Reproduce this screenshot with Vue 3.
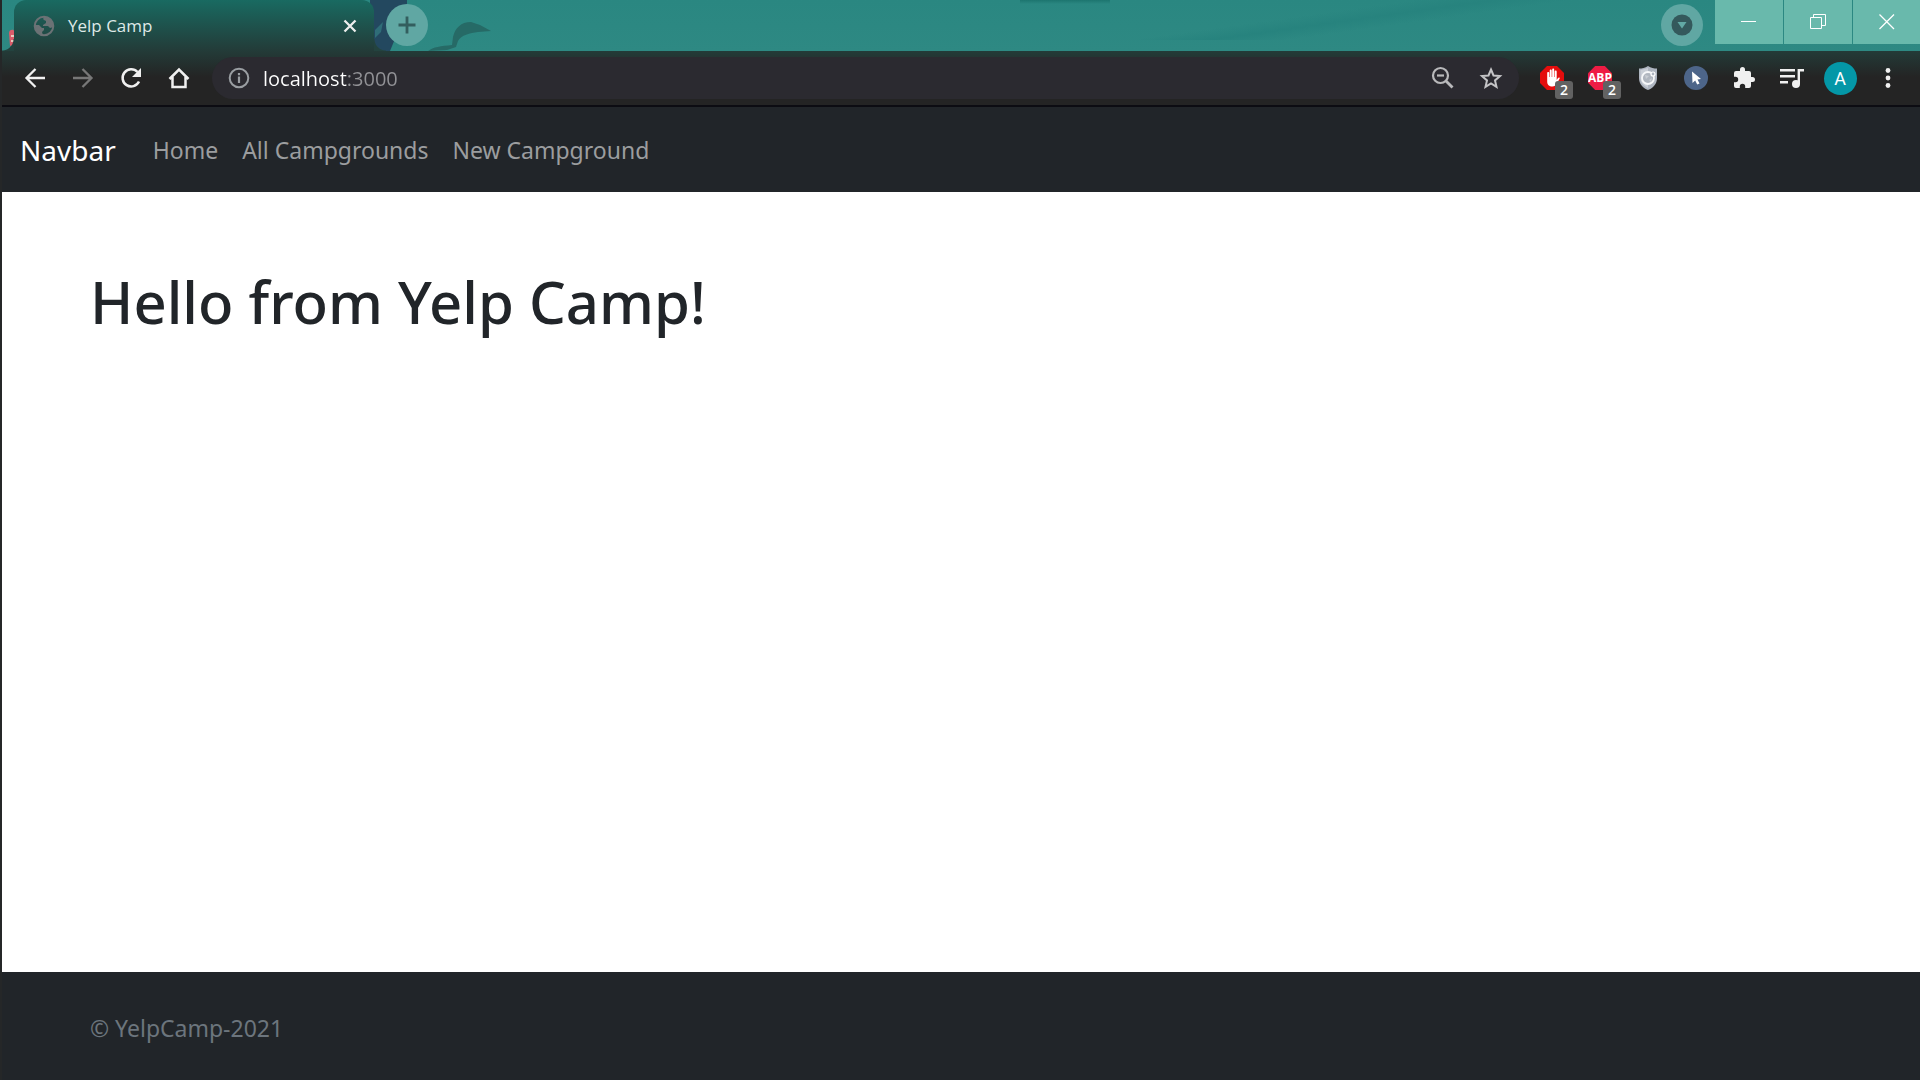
<script setup>
import { ref } from 'vue'

const address = ref('localhost:3000')
const links = ['Home', 'All Campgrounds', 'New Campground']
</script>

<template>
  <div class="window">
    <header class="browser">
      <div class="strip">
        <svg class="scenery" width="560" height="51" viewBox="0 0 560 51" aria-hidden="true">
          <path d="M370 0h37v6l-6 18-11 27h-20z" fill="#23485f" />
          <path d="M375 30l8-8-2 10-6 6z" fill="#2f6d78" />
          <path d="M9 33c0-4 5-4 5-2v14l-4 1z" fill="#d95c6a" />
          <path d="M11 36h3M11 41h3" stroke="#e8c9bd" stroke-width="2" />
          <path d="M428 51c5-4 13-5 24-6l1-8c2-9 8-15 18-15l9 3 11 6-13 1c-8 1-17 3-20 9l-2 6-9 3z" fill="#266a66" />
        </svg>
        <div class="tab">
          <svg width="24" height="24" viewBox="0 0 24 24" aria-hidden="true">
            <circle cx="12" cy="12" r="9.300" fill="none" stroke="#6b7275" stroke-width="2" />
            <path d="M12 2.500c-1 2-1 3 0 3.500l2 1v2l-3 2v1h5l2 2 3.500-1c.5-6-3.500-10-9.500-10.500zM3 11l4 0 3 3 2 0 0 2-2 2 1 3.500C6 21 2.500 17 3 11z" fill="#6b7275" />
          </svg>
          <span class="tab-title">Yelp Camp</span>
          <button class="tab-close" aria-label="Close tab">
            <svg width="16" height="16" viewBox="0 0 16 16"><path d="M2.500 2.500l11 11M13.500 2.500l-11 11" stroke="#eceeed" stroke-width="2.300" /></svg>
          </button>
        </div>
        <button class="round new-tab" aria-label="New tab">
          <svg width="20" height="20" viewBox="0 0 20 20"><path d="M10 1.500v17M1.500 10h17" stroke="#335e5e" stroke-width="2.800" /></svg>
        </button>
        <button class="round tab-search" aria-label="Search tabs">
          <svg width="22" height="22" viewBox="0 0 22 22"><circle cx="11" cy="11" r="10.500" fill="#34595c" /><path d="M6.500 8h9L11 14.500z" fill="#62a9a5" /></svg>
        </button>
        <div class="controls">
          <button aria-label="Minimize"><svg width="16" height="16" viewBox="0 0 16 16"><path d="M0 7.500h15" stroke="#fff" /></svg></button>
          <button aria-label="Restore"><svg width="16" height="16" viewBox="0 0 16 16"><path d="M.5 3.500h11v11H.5zM3.500 3V.5h12v11H12" fill="none" stroke="#fff" /></svg></button>
          <button aria-label="Close"><svg width="16" height="16" viewBox="0 0 16 16"><path d="M.5 .5l14.500 14.500M15 .5L.5 15" stroke="#fff" stroke-width="1.300" /></svg></button>
        </div>
      </div>

      <div class="toolbar">
        <button class="tool" aria-label="Back">
          <svg width="24" height="24" viewBox="0 0 24 24" fill="none" stroke="#f0f0f0" stroke-width="2.300"><path d="M22 12H4M12.500 3L3.500 12l9 9" /></svg>
        </button>
        <button class="tool" aria-label="Forward">
          <svg width="24" height="24" viewBox="0 0 24 24" fill="none" stroke="#777" stroke-width="2.300"><path d="M2 12h18M11.500 3l9 9-9 9" /></svg>
        </button>
        <button class="tool" aria-label="Reload">
          <svg width="24" height="24" viewBox="0 0 24 24"><path d="M20 15.500A8.600 8.600 0 1 1 18.500 6" fill="none" stroke="#f0f0f0" stroke-width="2.500" /><path d="M22 2v9h-9z" fill="#f0f0f0" /></svg>
        </button>
        <button class="tool" aria-label="Home">
          <svg width="24" height="24" viewBox="0 0 24 24" fill="none" stroke="#f0f0f0" stroke-width="2.500"><path d="M2.500 13L12 3.500l9.500 9.500M5.500 11v10h13V11" /></svg>
        </button>
        <div class="omnibox">
          <button class="inner" aria-label="View site information">
            <svg width="24" height="24" viewBox="0 0 24 24"><circle cx="12" cy="12" r="9.300" fill="none" stroke="#9a9ea2" stroke-width="2" /><path d="M12 10.500V17M12 7v2.200" stroke="#9a9ea2" stroke-width="2.200" /></svg>
          </button>
          <input v-model="address" class="address" type="text" aria-label="Address" spellcheck="false">
          <button class="inner" aria-label="Zoom">
            <svg width="24" height="24" viewBox="0 0 24 24" fill="none" stroke="#b9b9bb" stroke-width="2.200"><circle cx="9.500" cy="9.500" r="7.500" /><path d="M6 9.500h7" /><path d="M15 15l6.500 6.500" stroke-width="2.800" /></svg>
          </button>
          <button class="inner star" aria-label="Bookmark this tab">
            <svg width="24" height="24" viewBox="0 0 24 24" fill="none" stroke="#c4c4c6" stroke-width="2"><path d="M12 3.500l2.500 6 6.500.6-5 4.300 1.500 6.400-5.500-3.400-5.500 3.400L8 14.400l-5-4.300 6.500-.6z" /></svg>
          </button>
        </div>
        <button class="tool" aria-label="AdBlock">
          <svg width="24" height="24" viewBox="0 0 24 24"><path d="M7 0h10l7 7v10l-7 7H7l-7-7V7z" fill="#e40d0d" /><path d="M7.200 7c0-1.400 2-1.400 2 0v4h.5V4.500c0-1.500 2-1.500 2 0V11h.5V3.700c0-1.500 2-1.500 2 0V11h.5V5.500c0-1.500 2-1.500 2 0V14l1.300-2c.8-1 2.200-.5 1.600.7L16.500 18c-.8 1.600-2 2.500-4 2.500-3.500 0-5.300-1.500-5.300-5z" fill="#fff" /></svg>
          <span class="badge">2</span>
        </button>
        <button class="tool" aria-label="Adblock Plus">
          <span class="abp">ABP</span>
          <span class="badge">2</span>
        </button>
        <button class="tool" aria-label="Shield">
          <svg width="24" height="24" viewBox="0 0 24 24"><path d="M12 0c3 2 6 2.500 9 2.500V12c0 6-4 10-9 12-5-2-9-6-9-12V2.500C6 2.500 9 2 12 0z" fill="#aeb5c0" /><path d="M12 2v20c-4-2-7.500-5-7.500-10V4z" fill="#c9ced6" /><circle cx="12" cy="12" r="6" fill="#b0b6bf" stroke="#f6f7f9" stroke-width="1.800" /><path d="M9 9l4 1-3 3zM13 14l3-2-1 4z" fill="#c9cdd3" /><circle cx="17" cy="8" r="2" fill="#aeb5c0" stroke="#fff" stroke-width="1.200" /></svg>
        </button>
        <button class="tool" aria-label="Pointer">
          <svg width="24" height="24" viewBox="0 0 24 24"><circle cx="12" cy="12" r="12" fill="#4d6589" /><path d="M8 5.500l9 7.500-3.500.6 2 3.900-2.300 1-2-4L8.500 17z" fill="#fff" /></svg>
        </button>
        <button class="tool" aria-label="Extensions">
          <svg width="24" height="24" viewBox="0 0 24 24"><path d="M20.500 11H19V7a2 2 0 0 0-2-2h-4V3.500a2.500 2.500 0 0 0-5 0V5H4a2 2 0 0 0-2 2v3.800h1.500a2.700 2.700 0 0 1 0 5.400H2V20a2 2 0 0 0 2 2h3.800v-1.500a2.700 2.700 0 0 1 5.400 0V22H17a2 2 0 0 0 2-2v-4h1.500a2.500 2.500 0 0 0 0-5z" fill="#f0f0f0" /></svg>
        </button>
        <button class="tool" aria-label="Media controls">
          <svg width="24" height="24" viewBox="0 0 24 24"><path d="M0 4.200h15M0 10.200h15M0 16.200h8" stroke="#f0f0f0" stroke-width="2.400" /><circle cx="16" cy="18" r="4" fill="#f0f0f0" /><path d="M18.800 18V4.200H24" fill="none" stroke="#f0f0f0" stroke-width="2.400" /></svg>
        </button>
        <button class="tool" aria-label="Profile"><span class="avatar">A</span></button>
        <button class="tool" aria-label="Menu">
          <svg width="24" height="24" viewBox="0 0 24 24" fill="#f0f0f0"><circle cx="12" cy="4.500" r="2.400" /><circle cx="12" cy="12" r="2.400" /><circle cx="12" cy="19.500" r="2.400" /></svg>
        </button>
      </div>
    </header>

    <nav class="navbar">
      <a class="brand" href="#">Navbar</a>
      <a v-for="link in links" :key="link" class="link" href="#">{{ link }}</a>
    </nav>
    <main class="content">
      <h1>Hello from Yelp Camp!</h1>
    </main>
    <footer class="footer">
      <span>© YelpCamp-2021</span>
    </footer>
  </div>
</template>

<style>
body {
  margin: 0;
}
</style>

<style scoped>
.window {
  box-sizing: border-box;
  display: flex;
  flex-direction: column;
  min-height: 100vh;
  border-left: 2px solid #252728;
  background: #fff;
  font-family: "Segoe UI", "Noto Sans", "Open Sans", sans-serif;
}

.browser {
  font-family: "Segoe UI", "Open Sans", "Noto Sans", sans-serif;
}

button {
  padding: 0;
  border: 0;
  background: none;
  color: inherit;
  font: inherit;
}

svg {
  display: block;
  flex: none;
}

.strip {
  position: relative;
  display: flex;
  height: 51px;
  padding-left: 12px;
  background:
    linear-gradient(172deg, transparent 40%, #27837e 50%, transparent 60%) 1100px 0 / 500px 40px no-repeat,
    linear-gradient(#1d756f, transparent) 1018px 0 / 90px 4px no-repeat,
    linear-gradient(#2a8781, #2e8983);
}

.scenery {
  position: absolute;
  top: 0;
  left: -2px;
}

.tab {
  position: relative;
  display: flex;
  align-items: center;
  box-sizing: border-box;
  width: 360px;
  padding: 0 16px 0 18px;
  border-radius: 12px 12px 0 0;
  background: linear-gradient(#196a61, #233b38);
}

.tab::before,
.tab::after {
  content: "";
  position: absolute;
  bottom: 0;
  width: 12px;
  height: 12px;
}

.tab::before {
  right: 100%;
  background: radial-gradient(circle at 0 0, transparent 11px, #23433f 12px);
}

.tab::after {
  left: 100%;
  background: radial-gradient(circle at 100% 0, transparent 11px, #23433f 12px);
}

.tab-title {
  flex: 1;
  padding-left: 12px;
  color: #dfe9e7;
  font-size: 17px;
  line-height: 24px;
}

.round {
  position: relative;
  display: grid;
  place-items: center;
  width: 42px;
  height: 42px;
  margin-top: 4px;
  border-radius: 50%;
  background: #60a7a3;
}

.new-tab {
  margin-left: 12px;
}

.tab-search {
  margin-right: 12px;
  margin-left: auto;
}

.controls {
  display: flex;
  gap: 1px;
  height: 44px;
}

.controls button {
  display: grid;
  place-items: center;
  width: 68px;
  background: #69b9ac;
}

.controls button:last-child {
  width: 67px;
}

.toolbar {
  display: flex;
  align-items: center;
  height: 54px;
  padding: 0 8px 0 9px;
  border-bottom: 2px solid #0c0c12;
  background: linear-gradient(#233b38, #242424 26px);
}

.tool {
  position: relative;
  display: grid;
  flex: none;
  place-items: center;
  width: 48px;
  height: 48px;
}

.omnibox {
  display: flex;
  flex: 1;
  align-items: center;
  height: 42px;
  margin: 0 9px;
  padding: 0 4px 0 15px;
  border-radius: 21px;
  background: #2b2a30;
}

.inner {
  display: grid;
  place-items: center;
  width: 48px;
}

.inner:first-child {
  width: 24px;
}

.address {
  flex: 1;
  min-width: 0;
  margin-left: 12px;
  padding: 2px 0 0;
  border: 0;
  outline: 0;
  background: linear-gradient(90deg, #fff 84px, #929296 84px);
  background-clip: text;
  color: transparent;
  font: inherit;
  font-size: 20px;
  line-height: 28px;
}

.badge {
  position: absolute;
  top: 27px;
  left: 27px;
  width: 18px;
  height: 18px;
  border-radius: 3px;
  background: #626262;
  color: #fff;
  font-size: 14px;
  font-weight: 600;
  line-height: 18px;
}

.abp {
  width: 24px;
  height: 24px;
  background: #ee1c44;
  clip-path: polygon(30% 0, 70% 0, 100% 30%, 100% 70%, 70% 100%, 30% 100%, 0 70%, 0 30%);
  color: #fff;
  font-size: 12px;
  font-weight: 700;
  line-height: 24px;
}

.avatar {
  width: 33px;
  height: 33px;
  border-radius: 50%;
  background: #0497a7;
  color: #fff;
  font-family: Roboto, sans-serif;
  font-size: 18px;
  line-height: 34px;
}

.navbar {
  display: flex;
  align-items: center;
  box-sizing: border-box;
  min-height: 85px;
  padding: 20px 18px;
  background: #212529;
}

.navbar a {
  text-decoration: none;
}

.brand {
  margin-right: 25px;
  color: #fff;
  font-size: 28px;
  line-height: 42px;
}

.link {
  padding: 0 12px;
  color: #9b9d9f;
  font-size: 23px;
  line-height: 36px;
}

.content {
  flex: 1;
  padding: 72px 88px;
}

h1 {
  margin: 0;
  color: #212529;
  font-size: 58px;
  font-weight: 500;
  line-height: 76px;
}

.footer {
  padding: 38px 88px 34px;
  background: #212529;
  color: #6c757d;
  font-size: 23px;
  line-height: 36px;
}
</style>
